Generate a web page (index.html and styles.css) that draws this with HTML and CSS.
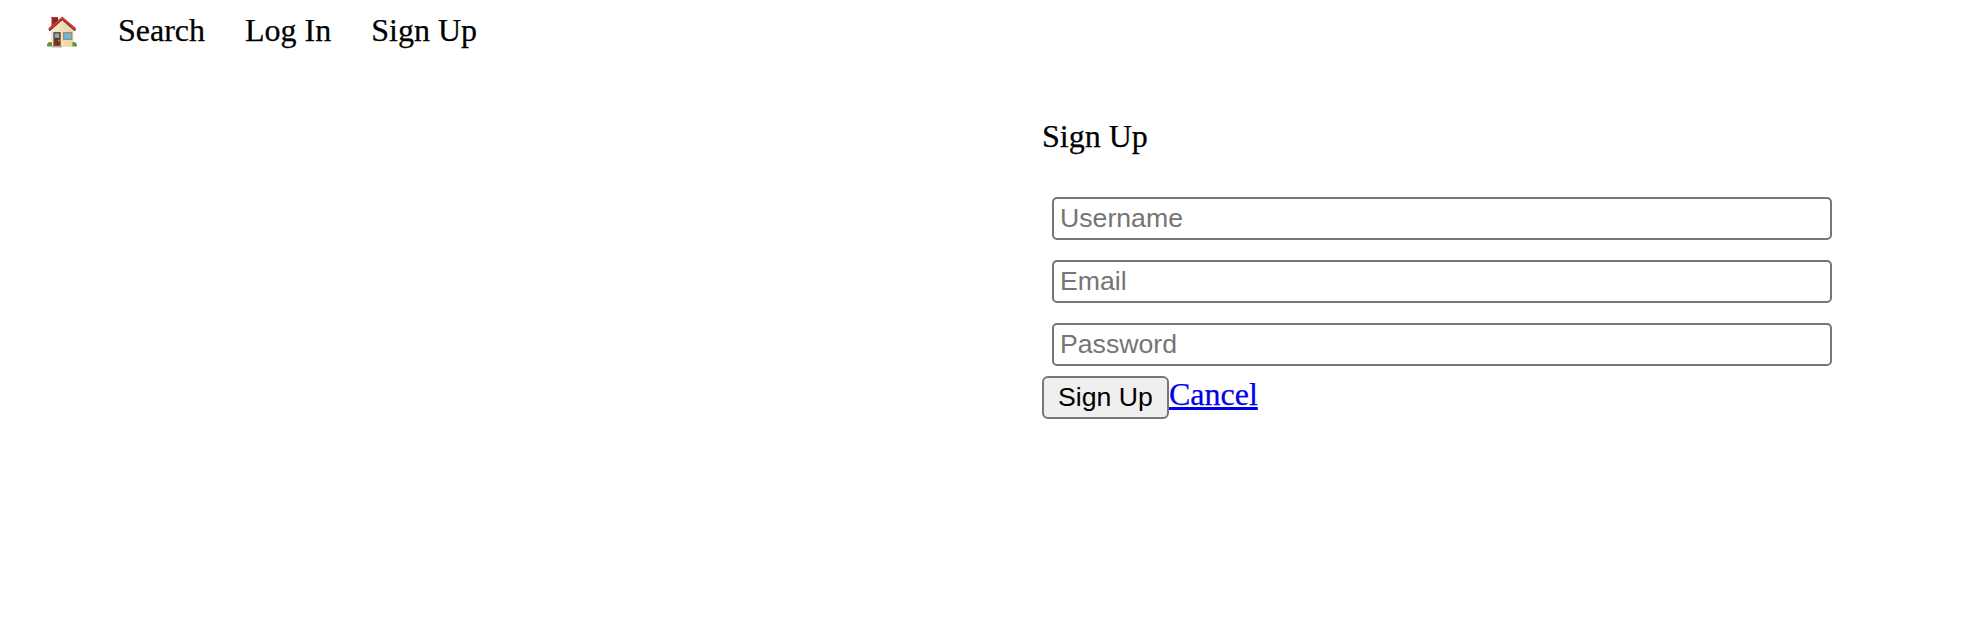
FILE: index.html
```html
<!DOCTYPE html>
<html lang="en">
<head>
<meta charset="utf-8">
<title>Sign Up</title>
<link rel="stylesheet" href="styles.css">
</head>
<body>
<nav class="nav">
  <a class="nav-link home" href="#" aria-label="Home">
    <svg class="house" viewBox="10 10 32 32" aria-hidden="true">
      <defs>
        <linearGradient id="wall" x1="0" y1="0" x2="1" y2="0"><stop offset="0" stop-color="#f8ead0"/><stop offset="1" stop-color="#e9d3a5"/></linearGradient>
        <linearGradient id="brick" x1="0" y1="0" x2="1" y2="0"><stop offset="0" stop-color="#a42c20"/><stop offset="1" stop-color="#6e2119"/></linearGradient>
      </defs>
      <path d="M15.500 11h6.500v9h-6.500z" fill="url(#brick)"/>
      <path d="M15.500 11h6.500v1.300h-6.500z" fill="#a83f33"/>
      <path d="M11.200 40.200q-.4-3.700 3.100-4.200 2.700.2 3.500 4.200z" fill="#58883a"/>
      <path d="M34.500 40.200q.7-4 3.400-4.200 3.300.4 3 4.200z" fill="#58883a"/>
      <path d="M14.800 23 26.200 13.300 37.400 23v17.800H14.800z" fill="url(#wall)"/>
      <path d="M13 24.500 26.200 13 39.400 24.500" fill="none" stroke="#463331" stroke-width="2"/>
      <path d="M13 23.200 26.200 12 39.400 23.200" fill="none" stroke="#d8352d" stroke-width="2.200"/>
      <path d="M17.300 26h7.500v14h-7.500z" fill="#815036"/>
      <path d="M18.500 27.200h5.100v12.800h-5.100z" fill="#6c3521"/>
      <path d="M18.800 27.500h4.400v4.300h-4.400z" fill="#72b6dd"/>
      <circle cx="22.900" cy="34.500" r=".8" fill="#e1b44b"/>
      <path d="M27 26h9.300v8h-9.300z" fill="#a18b70"/>
      <path d="M28.100 27.100h7.100v5.600h-7.100z" fill="#71b1dc"/>
      <path d="M11.300 40.200a3.400 3.400 0 0 1 4.700-3.800v3.800z" fill="#5f9140"/>
      <path d="M36.400 36.300q4.100-.1 4.300 3.900h-4.300z" fill="#5f9140"/>
      <path d="M16 39.800h10v1.700H16z" fill="#b6aa9d"/>
    </svg>
  </a>
  <a class="nav-link" href="#">Search</a>
  <a class="nav-link" href="#">Log In</a>
  <a class="nav-link" href="#">Sign Up</a>
</nav>
<main class="content">
  <form class="signup">
    <div class="title">Sign Up</div>
    <input class="field" type="text" placeholder="Username">
    <input class="field" type="email" placeholder="Email">
    <input class="field" type="password" placeholder="Password">
    <div class="actions">
      <button class="submit" type="button">Sign Up</button>
      <a class="cancel" href="#">Cancel</a>
    </div>
  </form>
</main>
</body>
</html>
```
FILE: styles.css
```css
body {
  margin: 0;
  background: #fff;
  color: #000;
  font: 32px/37px "Liberation Serif", "Times New Roman", serif;
  -webkit-text-stroke: 0.25px currentColor;
}

.nav {
  display: flex;
  gap: 40px;
  height: 37px;
  padding: 12px 46px 0;
}

.nav-link {
  color: #000;
  text-decoration: none;
}

.home {
  width: 32px;
}

.house {
  display: block;
  width: 32px;
  height: 32px;
  margin-top: 4px;
}

.content {
  display: flex;
  justify-content: flex-end;
  padding: 69px 122px 0 0;
}

.signup {
  display: flex;
  flex-direction: column;
  width: 800px;
}

.title {
  height: 37px;
  margin-bottom: 32px;
}

.field {
  box-sizing: border-box;
  height: 43px;
  margin: 10px;
  padding: 2px 6px;
  border: 2px solid #767676;
  border-radius: 5px;
  background: #fff;
  font: 26.667px "Liberation Sans", Arial, sans-serif;
  -webkit-text-stroke: 0;
}

.field::placeholder {
  color: #757575;
}

.actions {
  display: flex;
  align-items: flex-start;
}

.submit {
  box-sizing: border-box;
  width: 127px;
  height: 43px;
  padding: 0;
  border: 2px solid #767676;
  border-radius: 6px;
  background: #efefef;
  color: #000;
  font: 26.667px "Liberation Sans", Arial, sans-serif;
  -webkit-text-stroke: 0;
}

.cancel {
  color: #0000ee;
  text-decoration-thickness: 3px;
  text-underline-offset: 2px;
}
```
